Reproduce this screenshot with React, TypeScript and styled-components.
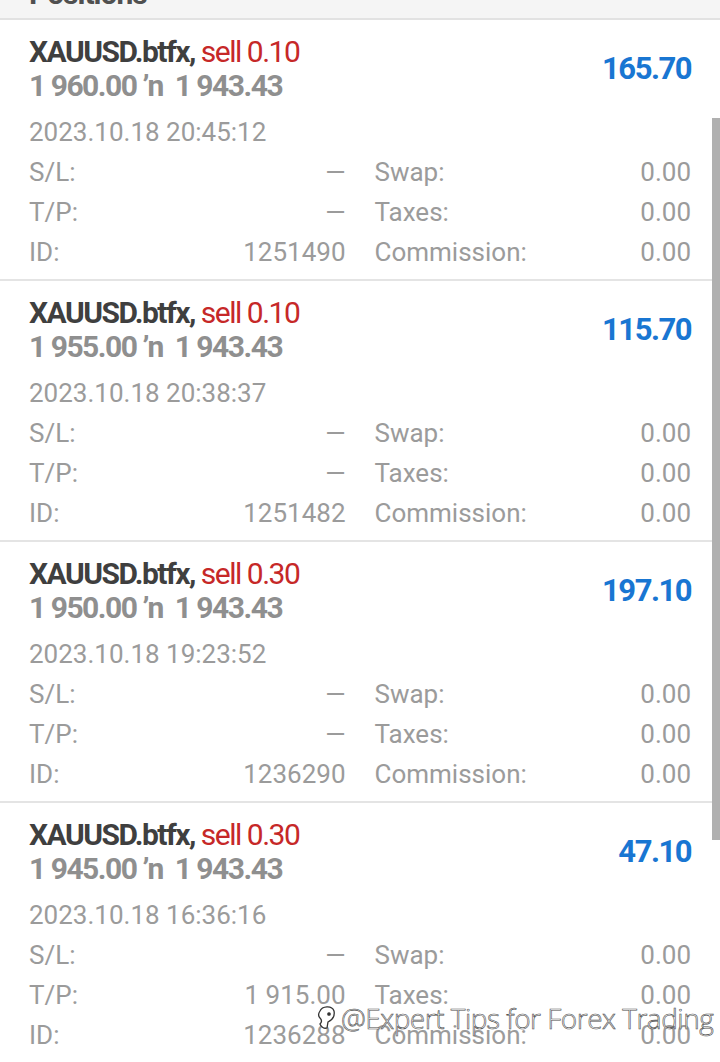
import React from "react";
import styled, { createGlobalStyle } from "styled-components";

const GlobalStyle = createGlobalStyle`
  html, body {
    margin: 0;
    padding: 0;
    background: #ffffff;
    overflow: hidden;
  }
  body {
    font-family: Roboto, "Liberation Sans", Arial, sans-serif;
    -webkit-font-smoothing: antialiased;
  }
`;

const Screen = styled.div`
  position: relative;
  width: 720px;
  height: 1062px;
  overflow: hidden;
  background: #ffffff;
`;

const Header = styled.div`
  height: 18px;
  overflow: hidden;
  background: #f5f5f5;
  border-bottom: 2px solid #e2e2e2;
  padding: 0 29px;
`;

const HeaderTitle = styled.div`
  margin-top: -23px;
  font-size: 30px;
  line-height: 34px;
  font-weight: 700;
  letter-spacing: -1px;
  color: #505050;
`;

const Card = styled.div`
  height: 244px;
  padding: 15px 29px 0;
  border-bottom: 2px solid #e4e4e4;
  overflow: hidden;
`;

const Top = styled.div`
  display: flex;
  align-items: center;
  justify-content: space-between;
`;

const TitleBlock = styled.div`
  display: flex;
  flex-direction: column;
`;

const Line = styled.div<{ $muted?: boolean }>`
  font-size: 30px;
  line-height: 34px;
  font-weight: 700;
  letter-spacing: -1.5px;
  white-space: pre;
  color: ${({ $muted }) => ($muted ? "#8f8f8f" : "#3f3f3f")};
`;

const Side = styled.span`
  font-weight: 400;
  color: #c62828;
`;

const Profit = styled.div`
  font-size: 31px;
  line-height: 34px;
  font-weight: 700;
  letter-spacing: -1.5px;
  color: #1976d2;
  margin-top: -1px;
`;

const DateLine = styled.div`
  margin-top: 9px;
  font-size: 26px;
  line-height: 40px;
  color: #9b9b9b;
`;

const Details = styled.div`
  display: grid;
  grid-template-columns: 1fr 1fr;
  column-gap: 29px;
`;

const Pair = styled.div`
  display: flex;
  justify-content: space-between;
  font-size: 26px;
  line-height: 40px;
  color: #9b9b9b;
  white-space: nowrap;
`;

const Scrollbar = styled.div`
  position: absolute;
  right: 0;
  top: 118px;
  width: 8px;
  height: 722px;
  background: #b0b0b0;
`;

const Watermark = styled.div`
  position: absolute;
  left: 314px;
  top: 999px;
  display: flex;
  align-items: center;
  gap: 3px;
  font-family: "Open Sans", Roboto, sans-serif;
  font-size: 28px;
  font-weight: 300;
  letter-spacing: -0.5px;
  color: #ffffff;
  -webkit-text-stroke: 0.6px #4a4a4a;
  white-space: nowrap;
`;

type Position = {
  side: string;
  open: string;
  current: string;
  profit: string;
  time: string;
  tp: string;
  id: string;
};

const positions: Position[] = [
  { side: "sell 0.10", open: "1 960.00", current: "1 943.43", profit: "165.70", time: "2023.10.18 20:45:12", tp: "—", id: "1251490" },
  { side: "sell 0.10", open: "1 955.00", current: "1 943.43", profit: "115.70", time: "2023.10.18 20:38:37", tp: "—", id: "1251482" },
  { side: "sell 0.30", open: "1 950.00", current: "1 943.43", profit: "197.10", time: "2023.10.18 19:23:52", tp: "—", id: "1236290" },
  { side: "sell 0.30", open: "1 945.00", current: "1 943.43", profit: "47.10", time: "2023.10.18 16:36:16", tp: "1 915.00", id: "1236288" },
];

function Row({ a, av, b, bv }: { a: string; av: string; b: string; bv: string }) {
  return (
    <Details>
      <Pair>
        <span>{a}</span>
        <span>{av}</span>
      </Pair>
      <Pair>
        <span>{b}</span>
        <span>{bv}</span>
      </Pair>
    </Details>
  );
}

function PositionCard({ p }: { p: Position }) {
  return (
    <Card>
      <Top>
        <TitleBlock>
          <Line>
            XAUUSD.btfx, <Side>{p.side}</Side>
          </Line>
          <Line $muted>{`${p.open} ʼn  ${p.current}`}</Line>
        </TitleBlock>
        <Profit>{p.profit}</Profit>
      </Top>
      <DateLine>{p.time}</DateLine>
      <Row a="S/L:" av="—" b="Swap:" bv="0.00" />
      <Row a="T/P:" av={p.tp} b="Taxes:" bv="0.00" />
      <Row a="ID:" av={p.id} b="Commission:" bv="0.00" />
    </Card>
  );
}

export default function App() {
  return (
    <Screen>
      <GlobalStyle />
      <Header>
        <HeaderTitle>Positions</HeaderTitle>
      </Header>
      {positions.map((p) => (
        <PositionCard key={p.id} p={p} />
      ))}
      <Scrollbar />
      <Watermark>
        <svg width="24" height="32" viewBox="0 0 24 32" fill="none" stroke="#333" strokeWidth="1.3">
          <path d="M6 9c2-5 12-6 14 0c1 5-2 9-6 11l-1 6c-3 1-6-1-7-4c2-2 2-4 0-6c-2-2-2-4 0-7z" fill="#fff" />
          <circle cx="15" cy="12" r="1.2" fill="#333" />
        </svg>
        <span>@Expert Tips for Forex Trading</span>
      </Watermark>
    </Screen>
  );
}
